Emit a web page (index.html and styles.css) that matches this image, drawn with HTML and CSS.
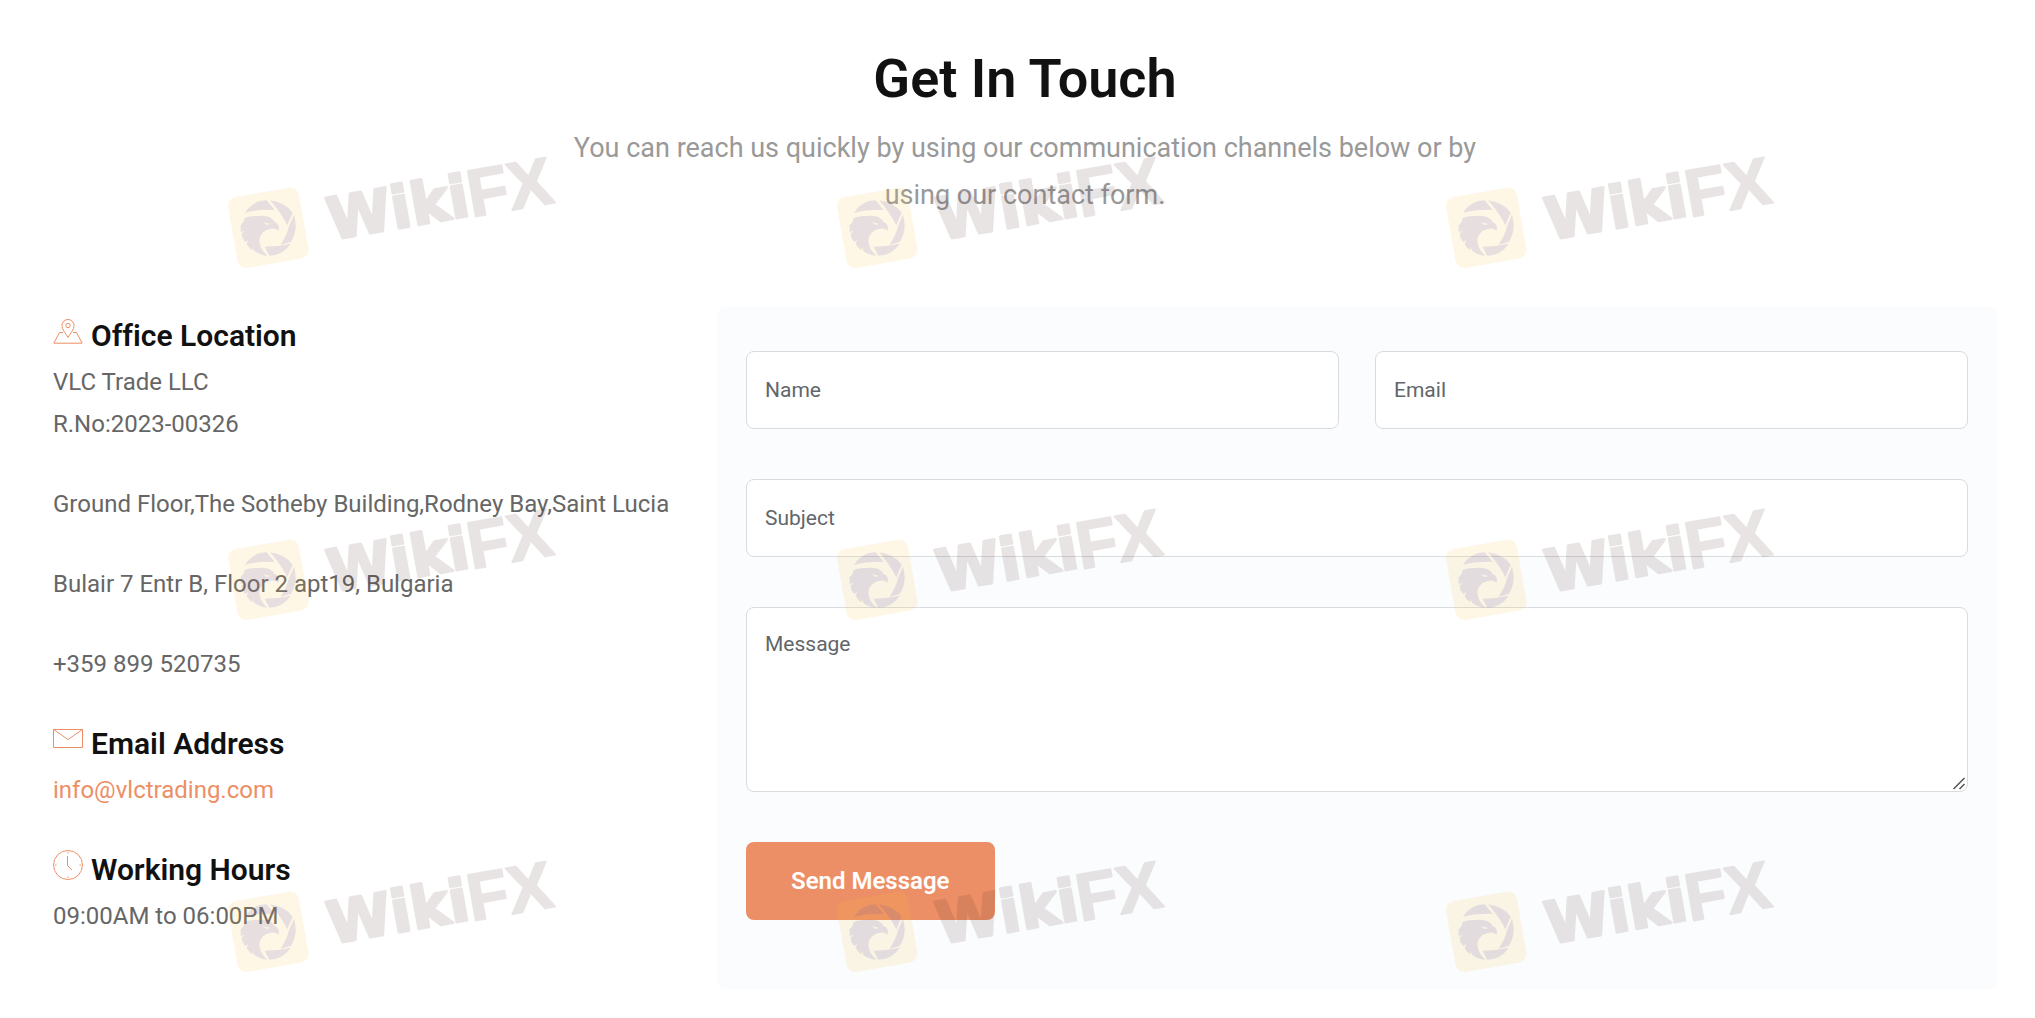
FILE: index.html
```html
<!DOCTYPE html>
<html lang="en">
<head>
  <meta charset="utf-8">
  <meta name="viewport" content="width=device-width, initial-scale=1">
  <title>Get In Touch</title>
  <link rel="stylesheet" href="styles.css">
</head>
<body>
  <main class="contact">
    <header class="intro">
      <h1 class="intro-title">Get In Touch</h1>
      <p class="intro-text">You can reach us quickly by using our communication channels below or by using our contact form.</p>
    </header>

    <div class="columns">
      <div class="details">
        <section class="detail">
          <h2 class="detail-title">
            <svg class="detail-icon" viewBox="0 0 30 30" aria-hidden="true">
              <path d="M15 21.500C12.500 17 9 13.500 9 9.500a6 6 0 0 1 12 0c0 4-3.500 7.500-6 12z"/>
              <circle cx="15" cy="9.500" r="2.200"/>
              <path d="M10 16.500H6.500L.8 27.200h28.400L23.500 16.500H20"/>
            </svg>
            Office Location
          </h2>
          <p class="detail-text">VLC Trade LLC<br>R.No:2023-00326</p>
          <p class="detail-text">Ground Floor,The Sotheby Building,Rodney Bay,Saint Lucia</p>
          <p class="detail-text">Bulair 7 Entr B, Floor 2 apt19, Bulgaria</p>
          <p class="detail-text">+359 899 520735</p>
        </section>
        <section class="detail">
          <h2 class="detail-title">
            <svg class="detail-icon" viewBox="0 0 30 30" aria-hidden="true">
              <path d="M.5 5.500h29v18H.5zM.5 5.500L15 15.500 29.500 5.500"/>
            </svg>
            Email Address
          </h2>
          <p class="detail-text"><a class="detail-link" href="mailto:info@vlctrading.com">info@vlctrading.com</a></p>
        </section>
        <section class="detail">
          <h2 class="detail-title">
            <svg class="detail-icon" viewBox="0 0 30 30" aria-hidden="true">
              <circle cx="15" cy="15" r="14.500"/>
              <path d="M14.500 6v9.500l4.500 4.500M15 2v1.500M15 26.500V28M2 15h1.500M26.500 15H28"/>
            </svg>
            Working Hours
          </h2>
          <p class="detail-text">09:00AM to 06:00PM</p>
        </section>
      </div>

      <form class="form">
        <div class="form-pair">
          <input class="field" type="text" name="name" placeholder="Name" aria-label="Name">
          <input class="field" type="email" name="email" placeholder="Email" aria-label="Email">
        </div>
        <input class="field" type="text" name="subject" placeholder="Subject" aria-label="Subject">
        <textarea class="field field-message" name="message" placeholder="Message" aria-label="Message"></textarea>
        <button class="send" type="submit">Send Message</button>
      </form>
    </div>
  </main>

  <svg class="defs" aria-hidden="true">
    <symbol id="logo" viewBox="0 0 96 156" overflow="visible">
      <rect class="logo-tile" x="-2" y="49" width="72" height="72" rx="9" transform="rotate(-10)"/>
      <g class="logo-bird" transform="translate(48 78) scale(.333)">
        <path d="M-69-46Q-45-83-4-83L20-54Q-25-58-69-46z"/>
        <path d="M6-83Q50-78 74-46L58-8Q40-45 6-83z"/>
        <path d="M78-40Q92 8 68 42L38 50Q58 20 62-2z"/>
        <path d="M-10 56Q30 56 68 47Q45 82 4 83z"/>
        <path fill-rule="evenodd" d="M-82-8Q-72-16-70-30Q-52-38-30-36Q8-40 20-18Q36-12 32 8Q20-2 2 4Q-24 12-26 38Q-24 64-2 83Q-24 82-40 70L-46 58L-46 67Q-58 60-64 48L-60 36L-69 42Q-78 30-80 18L-70 8L-82 12zM-16-18L6-12L-4-9z"/>
      </g>
    </symbol>
  </svg>
  <div class="marks" aria-hidden="true">
    <svg class="mark" viewBox="0 0 345 130"><use href="#logo" width="96" height="156"/><g transform="rotate(-10)"><text class="mark-wiki" x="94" y="108">Wiki</text><text class="mark-fx" x="236" y="110">FX</text></g></svg>
    <svg class="mark" viewBox="0 0 345 130"><use href="#logo" width="96" height="156"/><g transform="rotate(-10)"><text class="mark-wiki" x="94" y="108">Wiki</text><text class="mark-fx" x="236" y="110">FX</text></g></svg>
    <svg class="mark" viewBox="0 0 345 130"><use href="#logo" width="96" height="156"/><g transform="rotate(-10)"><text class="mark-wiki" x="94" y="108">Wiki</text><text class="mark-fx" x="236" y="110">FX</text></g></svg>
    <svg class="mark" viewBox="0 0 345 130"><use href="#logo" width="96" height="156"/><g transform="rotate(-10)"><text class="mark-wiki" x="94" y="108">Wiki</text><text class="mark-fx" x="236" y="110">FX</text></g></svg>
    <svg class="mark" viewBox="0 0 345 130"><use href="#logo" width="96" height="156"/><g transform="rotate(-10)"><text class="mark-wiki" x="94" y="108">Wiki</text><text class="mark-fx" x="236" y="110">FX</text></g></svg>
    <svg class="mark" viewBox="0 0 345 130"><use href="#logo" width="96" height="156"/><g transform="rotate(-10)"><text class="mark-wiki" x="94" y="108">Wiki</text><text class="mark-fx" x="236" y="110">FX</text></g></svg>
    <svg class="mark" viewBox="0 0 345 130"><use href="#logo" width="96" height="156"/><g transform="rotate(-10)"><text class="mark-wiki" x="94" y="108">Wiki</text><text class="mark-fx" x="236" y="110">FX</text></g></svg>
    <svg class="mark" viewBox="0 0 345 130"><use href="#logo" width="96" height="156"/><g transform="rotate(-10)"><text class="mark-wiki" x="94" y="108">Wiki</text><text class="mark-fx" x="236" y="110">FX</text></g></svg>
    <svg class="mark" viewBox="0 0 345 130"><use href="#logo" width="96" height="156"/><g transform="rotate(-10)"><text class="mark-wiki" x="94" y="108">Wiki</text><text class="mark-fx" x="236" y="110">FX</text></g></svg>
  </div>
</body>
</html>
```
FILE: styles.css
```css
*,
*::before,
*::after {
  box-sizing: border-box;
}

body {
  position: relative;
  margin: 0;
  background: #fff;
  color: #666;
  font-family: Roboto, "Liberation Sans", sans-serif;
  font-size: 24px;
  font-variant-ligatures: none;
  line-height: 42px;
}

h1,
h2,
p {
  margin: 0;
}

.contact {
  padding: 46px 38px 28px 53px;
}

.intro {
  max-width: 960px;
  margin: 0 auto 88px;
  text-align: center;
}

.intro-title {
  margin-bottom: 14px;
  color: #111;
  font-size: 54px;
  font-weight: 600;
  line-height: 65px;
}

.intro-text {
  color: #999;
  font-size: 27px;
  line-height: 47px;
}

.columns {
  display: grid;
  grid-template-columns: 1fr 2fr;
  gap: 24px;
}

.details {
  display: flex;
  flex-direction: column;
  gap: 39px;
  padding-top: 9px;
}

.detail-title {
  display: flex;
  align-items: baseline;
  gap: 8px;
  margin-bottom: 7px;
  color: #111;
  font-size: 30px;
  font-weight: 600;
  line-height: 36px;
}

.detail-icon {
  flex: none;
  width: 30px;
  height: 30px;
  fill: none;
  stroke: #ec8f66;
  stroke-width: 1;
}

.detail-text + .detail-text {
  margin-top: 38px;
}

.detail-link {
  color: #ec8f66;
  text-decoration: none;
}

.form {
  display: flex;
  flex-direction: column;
  align-items: flex-start;
  gap: 50px;
  padding: 44px 29px 69px;
  border-radius: 8px;
  background: #fafcfe;
}

.form-pair {
  display: grid;
  grid-template-columns: 1fr 1fr;
  gap: 36px;
  width: 100%;
}

.field {
  display: block;
  width: 100%;
  height: 78px;
  padding: 0 18px;
  border: 1px solid #d9dcdf;
  border-radius: 8px;
  background: #fff;
  color: #666;
  font-family: inherit;
  font-size: 21px;
  line-height: 32px;
}

.field::placeholder {
  color: #62666a;
}

.field-message {
  height: 185px;
  padding: 20px 18px;
  resize: vertical;
}

.field-message::-webkit-resizer {
  background: url("data:image/svg+xml,%3Csvg xmlns='http://www.w3.org/2000/svg' viewBox='0 0 15 15'%3E%3Cpath d='M1.500 13L12.500 2M7.500 13L12.500 8' stroke='%23555' stroke-width='1.500'/%3E%3C/svg%3E") no-repeat;
}

.send {
  height: 78px;
  padding: 0 45px;
  border: 0;
  border-radius: 8px;
  background: #ec8f66;
  color: #fff;
  font-family: inherit;
  font-size: 24px;
  font-weight: 600;
}

/* Watermark layer over the whole page */
.defs {
  position: absolute;
  width: 0;
  height: 0;
}

.marks {
  position: absolute;
  inset: 0;
  display: grid;
  grid-template-columns: repeat(3, 609px);
  grid-auto-rows: 352px;
  padding: 150px 0 0 220px;
  overflow: hidden;
  pointer-events: none;
}

.mark {
  width: 345px;
  height: 130px;
  overflow: visible;
}

.logo-tile {
  fill: #ffc040;
  opacity: .13;
}

.logo-bird {
  fill: #5a50c0;
  opacity: .14;
}

.mark-wiki,
.mark-fx {
  fill: #401818;
  stroke: #401818;
  stroke-linejoin: round;
  opacity: .11;
}

.mark-wiki {
  stroke-width: 3;
  font-family: "DejaVu Sans", sans-serif;
  font-size: 58px;
  font-weight: 700;
}

.mark-fx {
  stroke-width: 2;
  font-family: "Liberation Sans", sans-serif;
  font-size: 67px;
  font-weight: 700;
}
```
